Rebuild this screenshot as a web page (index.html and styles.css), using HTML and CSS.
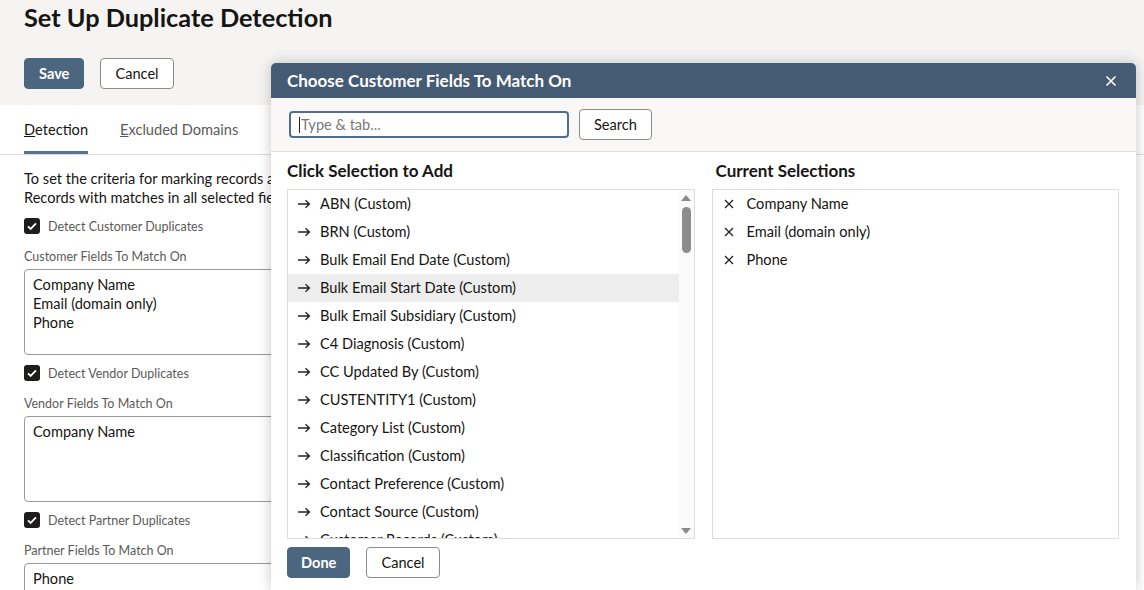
FILE: index.html
```html
<!DOCTYPE html>
<html lang="en">
<head>
<meta charset="UTF-8" />
<meta name="viewport" content="width=device-width, initial-scale=1" />
<title>Set Up Duplicate Detection</title>
<link rel="stylesheet" href="styles.css">
</head>
<body>
  <header class="page-header">
    <h1>Set Up Duplicate Detection</h1>
    <div class="actions">
      <button type="button" class="btn primary">Save</button>
      <button type="button" class="btn">Cancel</button>
    </div>
  </header>

  <nav class="tabs">
    <a class="tab active"><u>D</u>etection</a>
    <a class="tab"><u>E</u>xcluded Domains</a>
  </nav>

  <main class="content">
    <p class="intro">To set the criteria for marking records as duplicates, select the fields to match on.<br>Records with matches in all selected fields are marked as duplicates.</p>

    <label class="check"><span class="box"><svg viewBox="0 0 16 16" width="16" height="16"><path d="M4 8.3l2.6 2.6L12 5.4" fill="none" stroke="#fff" stroke-width="1.8"/></svg></span>Detect Customer Duplicates</label>
    <div class="field-label">Customer Fields To Match On</div>
    <div class="field-box">Company Name<br>Email (domain only)<br>Phone</div>

    <label class="check"><span class="box"><svg viewBox="0 0 16 16" width="16" height="16"><path d="M4 8.3l2.6 2.6L12 5.4" fill="none" stroke="#fff" stroke-width="1.8"/></svg></span>Detect Vendor Duplicates</label>
    <div class="field-label">Vendor Fields To Match On</div>
    <div class="field-box">Company Name</div>

    <label class="check"><span class="box"><svg viewBox="0 0 16 16" width="16" height="16"><path d="M4 8.3l2.6 2.6L12 5.4" fill="none" stroke="#fff" stroke-width="1.8"/></svg></span>Detect Partner Duplicates</label>
    <div class="field-label">Partner Fields To Match On</div>
    <div class="field-box">Phone</div>
  </main>

  <section class="dialog" role="dialog" aria-label="Choose Customer Fields To Match On">
    <div class="dialog-head">
      <h2>Choose Customer Fields To Match On</h2>
      <svg class="close" viewBox="0 0 12 12" width="12" height="12"><path d="M1.5 1.5l9 9M10.5 1.5l-9 9" stroke="#fff" stroke-width="1.6"/></svg>
    </div>
    <div class="dialog-search">
      <div class="search-input"><span class="caret"></span>Type &amp; tab...</div>
      <button type="button" class="btn">Search</button>
    </div>
    <div class="dialog-body">
      <div class="column">
        <h3>Click Selection to Add</h3>
        <div class="list">
          <ul class="items">
            <li><svg class="arrow" viewBox="0 0 14 10" width="14" height="10"><path d="M1 5h11.5M8.5 1.2L12.5 5 8.5 8.8" fill="none" stroke="#222" stroke-width="1.3"/></svg>ABN (Custom)</li>
            <li><svg class="arrow" viewBox="0 0 14 10" width="14" height="10"><path d="M1 5h11.5M8.5 1.2L12.5 5 8.5 8.8" fill="none" stroke="#222" stroke-width="1.3"/></svg>BRN (Custom)</li>
            <li><svg class="arrow" viewBox="0 0 14 10" width="14" height="10"><path d="M1 5h11.5M8.5 1.2L12.5 5 8.5 8.8" fill="none" stroke="#222" stroke-width="1.3"/></svg>Bulk Email End Date (Custom)</li>
            <li class="hover"><svg class="arrow" viewBox="0 0 14 10" width="14" height="10"><path d="M1 5h11.5M8.5 1.2L12.5 5 8.5 8.8" fill="none" stroke="#222" stroke-width="1.3"/></svg>Bulk Email Start Date (Custom)</li>
            <li><svg class="arrow" viewBox="0 0 14 10" width="14" height="10"><path d="M1 5h11.5M8.5 1.2L12.5 5 8.5 8.8" fill="none" stroke="#222" stroke-width="1.3"/></svg>Bulk Email Subsidiary (Custom)</li>
            <li><svg class="arrow" viewBox="0 0 14 10" width="14" height="10"><path d="M1 5h11.5M8.5 1.2L12.5 5 8.5 8.8" fill="none" stroke="#222" stroke-width="1.3"/></svg>C4 Diagnosis (Custom)</li>
            <li><svg class="arrow" viewBox="0 0 14 10" width="14" height="10"><path d="M1 5h11.5M8.5 1.2L12.5 5 8.5 8.8" fill="none" stroke="#222" stroke-width="1.3"/></svg>CC Updated By (Custom)</li>
            <li><svg class="arrow" viewBox="0 0 14 10" width="14" height="10"><path d="M1 5h11.5M8.5 1.2L12.5 5 8.5 8.8" fill="none" stroke="#222" stroke-width="1.3"/></svg>CUSTENTITY1 (Custom)</li>
            <li><svg class="arrow" viewBox="0 0 14 10" width="14" height="10"><path d="M1 5h11.5M8.5 1.2L12.5 5 8.5 8.8" fill="none" stroke="#222" stroke-width="1.3"/></svg>Category List (Custom)</li>
            <li><svg class="arrow" viewBox="0 0 14 10" width="14" height="10"><path d="M1 5h11.5M8.5 1.2L12.5 5 8.5 8.8" fill="none" stroke="#222" stroke-width="1.3"/></svg>Classification (Custom)</li>
            <li><svg class="arrow" viewBox="0 0 14 10" width="14" height="10"><path d="M1 5h11.5M8.5 1.2L12.5 5 8.5 8.8" fill="none" stroke="#222" stroke-width="1.3"/></svg>Contact Preference (Custom)</li>
            <li><svg class="arrow" viewBox="0 0 14 10" width="14" height="10"><path d="M1 5h11.5M8.5 1.2L12.5 5 8.5 8.8" fill="none" stroke="#222" stroke-width="1.3"/></svg>Contact Source (Custom)</li>
            <li><svg class="arrow" viewBox="0 0 14 10" width="14" height="10"><path d="M1 5h11.5M8.5 1.2L12.5 5 8.5 8.8" fill="none" stroke="#222" stroke-width="1.3"/></svg>Customer Records (Custom)</li>
          </ul>
          <div class="scrollbar">
            <span class="tri up"></span>
            <span class="thumb"></span>
            <span class="track"></span>
            <span class="tri down"></span>
          </div>
        </div>
      </div>
      <div class="column current">
        <h3>Current Selections</h3>
        <div class="list">
          <ul class="items">
            <li><svg class="remove" viewBox="0 0 10 10" width="10" height="10"><path d="M1 1l8 8M9 1L1 9" stroke="#222" stroke-width="1.3"/></svg>Company Name</li>
            <li><svg class="remove" viewBox="0 0 10 10" width="10" height="10"><path d="M1 1l8 8M9 1L1 9" stroke="#222" stroke-width="1.3"/></svg>Email (domain only)</li>
            <li><svg class="remove" viewBox="0 0 10 10" width="10" height="10"><path d="M1 1l8 8M9 1L1 9" stroke="#222" stroke-width="1.3"/></svg>Phone</li>
          </ul>
        </div>
      </div>
    </div>
    <div class="dialog-foot">
      <button type="button" class="btn primary">Done</button>
      <button type="button" class="btn">Cancel</button>
    </div>
  </section>
</body>
</html>
```

FILE: styles.css
```css
:root {
  --text: #161513;
  --muted: #5b5a58;
  --header-bg: #f5f4f2;
  --primary: #4d6680;
  --dialog-head: #455b73;
  --line: #dedddb;
  --font: 'Lato', 'Noto Sans', sans-serif;
}
*, *::before, *::after {
  box-sizing: border-box;
}
html, body {
  height: 590px;
  overflow: hidden;
}
body {
  margin: 0;
  font-family: var(--font);
  color: var(--text);
  background: #fff;
}
.page-header {
  background: var(--header-bg);
  padding: 0 24px 16px;
}
h1 {
  margin: 0;
  font-size: 25.3px;
  line-height: 34px;
  font-weight: 700;
}
.actions {
  display: flex;
  gap: 16px;
  margin-top: 24px;
}
.btn {
  font-family: var(--font);
  font-size: 14.6px;
  height: 31px;
  padding: 0 14px;
  border: 1px solid #8c8b89;
  border-radius: 4px;
  background: #fff;
  color: var(--text);
}
.btn.primary {
  background: var(--primary);
  border-color: var(--primary);
  color: #fff;
  font-weight: 700;
}
.tabs {
  display: flex;
  gap: 32px;
  padding: 0 24px;
  height: 50px;
  border-bottom: 1px solid var(--line);
}
.tab {
  display: flex;
  align-items: center;
  font-size: 14.6px;
  color: var(--muted);
  border-bottom: 3px solid transparent;
  padding-top: 3px;
}
.tab.active {
  color: var(--text);
  border-bottom-color: #557494;
}
.content {
  width: 271px;
  padding: 0 0 0 24px;
  overflow: hidden;
}
.intro {
  margin: 14px 0 11px;
  font-size: 14.6px;
  line-height: 19px;
  white-space: nowrap;
}
.check {
  display: flex;
  align-items: center;
  gap: 8px;
  font-size: 12.5px;
  color: var(--muted);
  height: 16px;
  white-space: nowrap;
}
.box {
  flex: none;
  width: 16px;
  height: 16px;
  border-radius: 3px;
  background: #1e1d1b;
  display: flex;
}
.field-label {
  font-size: 12.5px;
  color: var(--muted);
  margin-top: 15px;
  line-height: 16px;
  white-space: nowrap;
}
.field-box {
  width: 420px;
  height: 86px;
  margin: 4px 0 10px;
  border: 1px solid #9a9997;
  border-radius: 4px;
  padding: 5px 8px;
  font-size: 14.6px;
  line-height: 19px;
}

/* dialog */
.dialog {
  position: absolute;
  left: 271px;
  top: 63px;
  width: 865px;
  height: 527px;
  background: #fff;
  border-radius: 5px 5px 0 0;
  box-shadow: 0 0 14px rgba(0, 0, 0, 0.22);
}
.dialog-head {
  height: 35px;
  background: var(--dialog-head);
  border-radius: 5px 5px 0 0;
  display: flex;
  align-items: center;
  justify-content: space-between;
  padding: 0 19px 0 16px;
}
h2 {
  margin: 0;
  font-size: 17px;
  font-weight: 700;
  color: #fff;
}
.dialog-search {
  height: 54px;
  background: #f9f8f6;
  border-bottom: 1px solid var(--line);
  display: flex;
  align-items: center;
  gap: 10px;
  padding: 0 18px;
}
.search-input {
  width: 280px;
  height: 27px;
  border: 2px solid #4f6f92;
  border-radius: 4px;
  background: #fff;
  display: flex;
  align-items: center;
  padding-left: 8px;
  font-size: 14.6px;
  color: #7a7977;
}
.caret {
  width: 1px;
  height: 16px;
  background: #222;
  margin-right: 1px;
}
.dialog-body {
  display: flex;
  gap: 17px;
  padding: 8px 17px 0 16px;
}
.column {
  flex: 1;
}
h3 {
  margin: 0 0 7px;
  font-size: 17px;
  line-height: 22px;
  font-weight: 700;
}
.current h3 {
  padding-left: 4px;
}
.list {
  height: 350px;
  border: 1px solid var(--line);
  display: flex;
  overflow: hidden;
}
.items {
  flex: 1;
  list-style: none;
  margin: 0;
  padding: 0;
  overflow: hidden;
}
.items li {
  height: 28px;
  display: flex;
  align-items: center;
  gap: 9px;
  padding: 0 0 1px 9px;
  font-size: 14.6px;
  white-space: nowrap;
}
.items li.hover {
  background: #ededed;
}
.items .remove {
  margin-left: 2px;
  margin-right: 4px;
}
.scrollbar {
  width: 15px;
  display: flex;
  flex-direction: column;
  align-items: center;
  padding: 5px 0 4px;
  background: #fbfbfb;
}
.tri {
  width: 0;
  height: 0;
  border-left: 5px solid transparent;
  border-right: 5px solid transparent;
}
.tri.up {
  border-bottom: 6px solid #8a8a8a;
}
.tri.down {
  border-top: 6px solid #8a8a8a;
}
.thumb {
  width: 9px;
  height: 46px;
  margin-top: 6px;
  border-radius: 5px;
  background: #8c8c8c;
}
.track {
  flex: 1;
}
.dialog-foot {
  display: flex;
  gap: 16px;
  padding: 8px 16px;
}
.dialog-foot .btn.primary {
  padding: 0 13px;
}
```
